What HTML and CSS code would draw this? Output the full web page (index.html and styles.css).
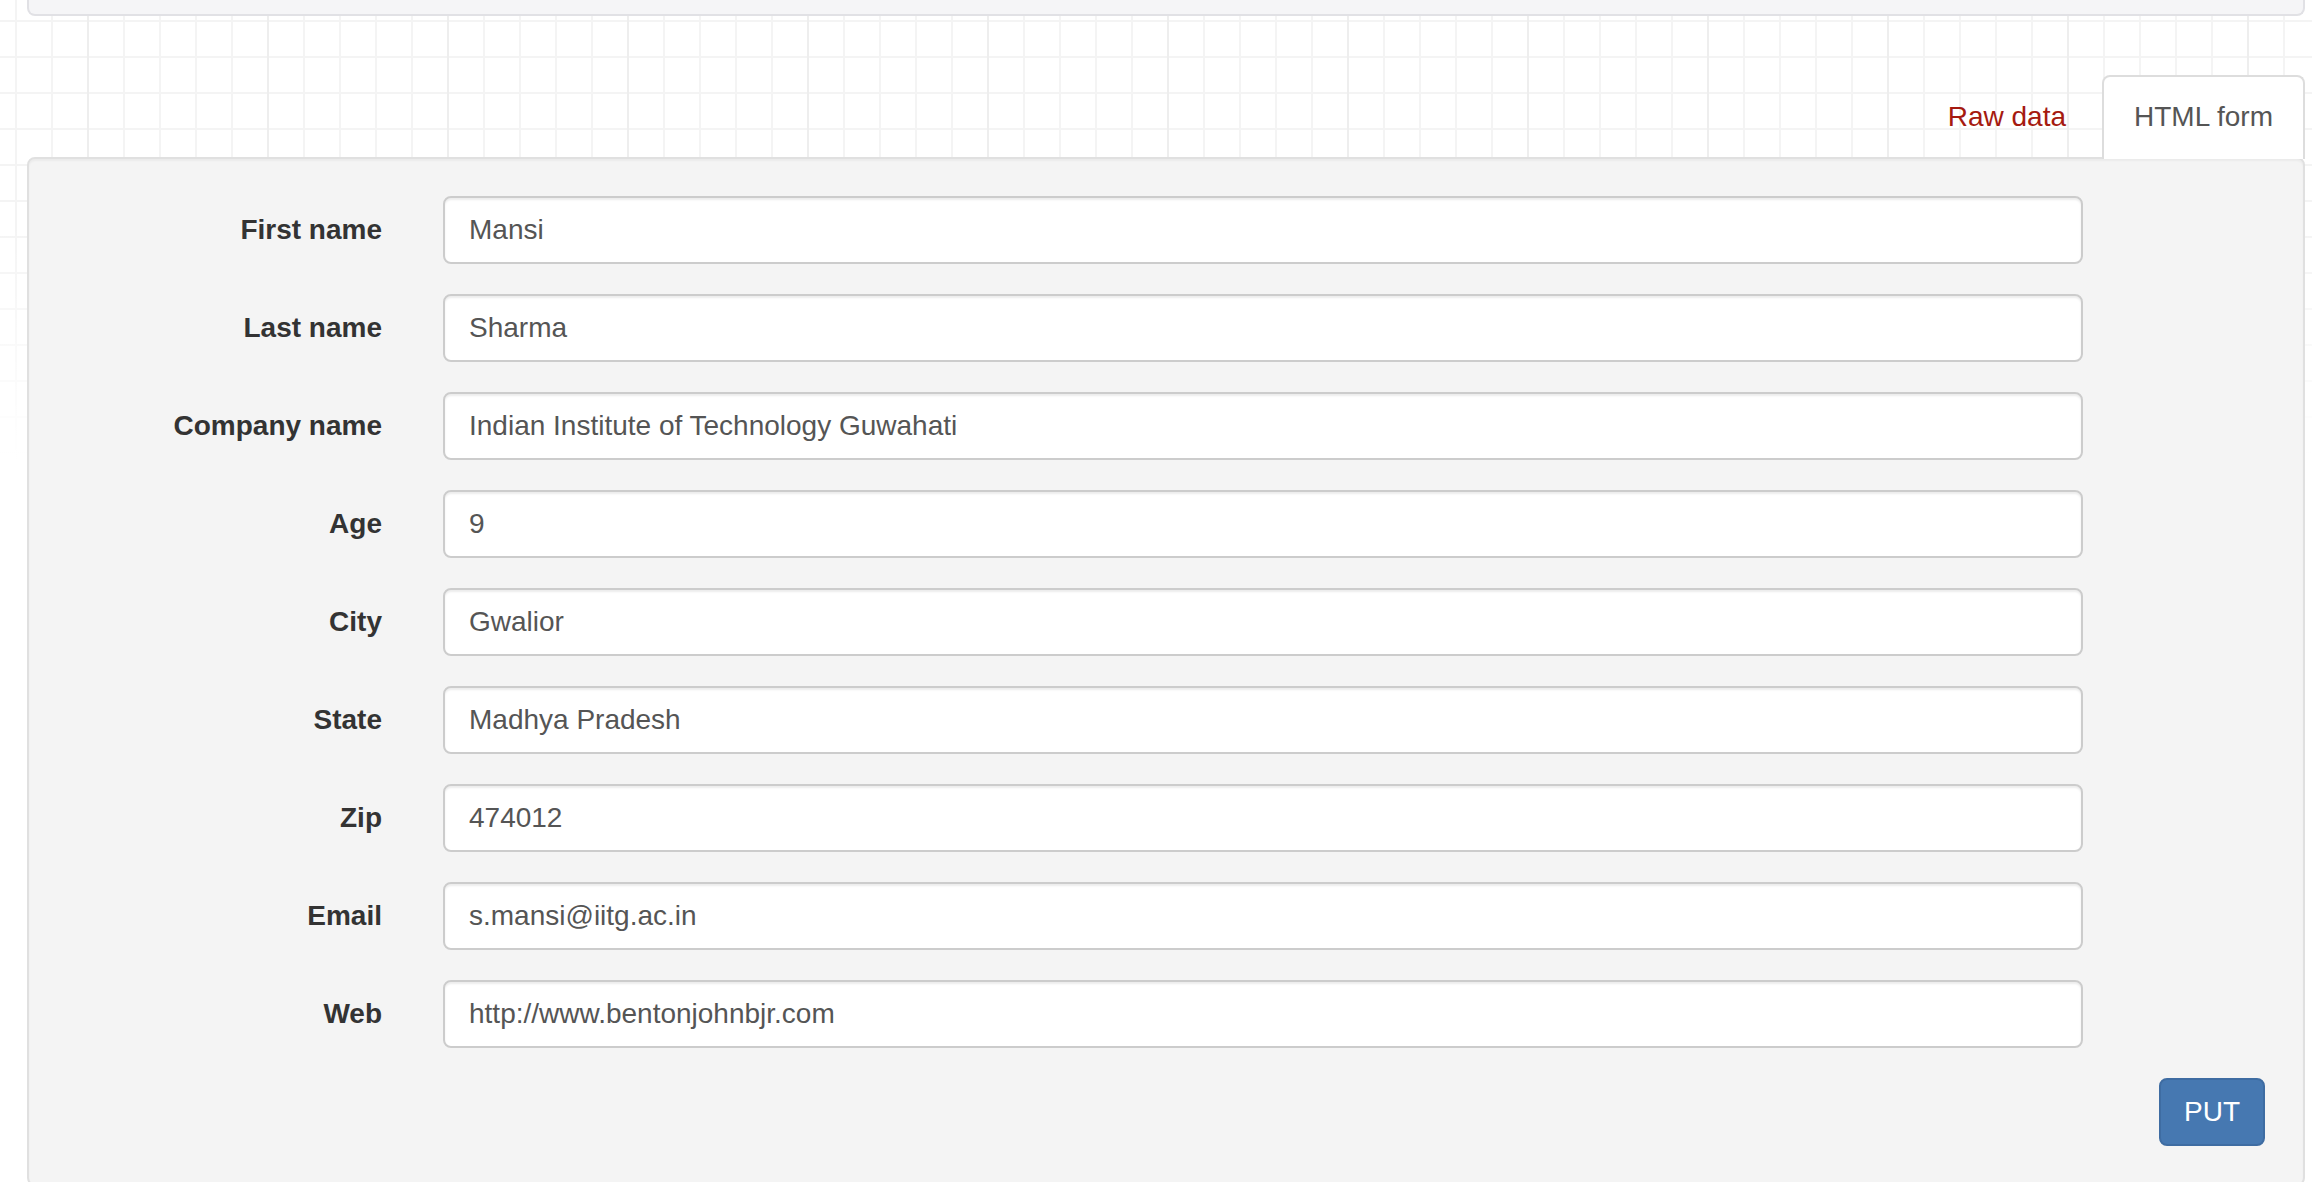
FILE: index.html
```html
<!DOCTYPE html>
<html lang="en">
<head>
<meta charset="utf-8">
<title>HTML form</title>
<link rel="stylesheet" href="styles.css">
</head>
<body>
<div class="page">
  <div class="response-panel"></div>

  <ul class="tabs">
    <li class="tab"><a class="tab-link" href="#raw">Raw data</a></li>
    <li class="tab tab-active"><a class="tab-link" href="#form">HTML form</a></li>
  </ul>

  <div class="well">
    <form class="form-horizontal">
      <div class="form-row">
        <label class="control-label">First name</label>
        <div class="form-control">Mansi</div>
      </div>
      <div class="form-row">
        <label class="control-label">Last name</label>
        <div class="form-control">Sharma</div>
      </div>
      <div class="form-row">
        <label class="control-label">Company name</label>
        <div class="form-control">Indian Institute of Technology Guwahati</div>
      </div>
      <div class="form-row">
        <label class="control-label">Age</label>
        <div class="form-control">9</div>
      </div>
      <div class="form-row">
        <label class="control-label">City</label>
        <div class="form-control">Gwalior</div>
      </div>
      <div class="form-row">
        <label class="control-label">State</label>
        <div class="form-control">Madhya Pradesh</div>
      </div>
      <div class="form-row">
        <label class="control-label">Zip</label>
        <div class="form-control">474012</div>
      </div>
      <div class="form-row">
        <label class="control-label">Email</label>
        <div class="form-control">s.mansi@iitg.ac.in</div>
      </div>
      <div class="form-row">
        <label class="control-label">Web</label>
        <div class="form-control">http://www.bentonjohnbjr.com</div>
      </div>
      <div class="form-actions">
        <button class="btn-primary" type="button">PUT</button>
      </div>
    </form>
  </div>
</div>
</body>
</html>
```

FILE: styles.css
```css
html, body {
  margin: 0;
  padding: 0;
  overflow: hidden;
}

body {
  font-family: "Liberation Sans", Arial, Helvetica, sans-serif;
  font-size: 28px;
  line-height: 40px;
  color: #333;
  background: #fff;
}

.page {
  min-height: 1182px;
  box-sizing: border-box;
  padding-left: 27px;
  padding-right: 7px;
  background-color: #fff;
  background-image:
    linear-gradient(to bottom, rgba(255,255,255,0) 0, rgba(255,255,255,0) 220px, #fff 460px),
    linear-gradient(to right, #eeeeee 0, #eeeeee 2px, transparent 2px),
    linear-gradient(to right, #f4f4f4 0, #f4f4f4 2px, transparent 2px),
    linear-gradient(to bottom, #f4f4f4 0, #f4f4f4 2px, transparent 2px);
  background-size: 100% 100%, 180px 100%, 36px 100%, 100% 36px;
  background-position: 0 0, 87px 0, 15px 0, 0 20px;
  background-repeat: no-repeat, repeat-x, repeat, repeat;
}

.response-panel {
  height: 14px;
  background: #f5f5f7;
  border: 2px solid #e1e1e5;
  border-top: none;
  border-radius: 0 0 8px 8px;
}

.tabs {
  list-style: none;
  margin: 59px 0 0 0;
  padding: 0;
  display: flex;
  justify-content: flex-end;
  align-items: flex-end;
  height: 82px;
}

.tab {
  margin-left: 4px;
  margin-bottom: -2px;
  position: relative;
  z-index: 1;
}

.tab-link {
  display: block;
  padding: 20px 30px 22px 30px;
  line-height: 40px;
  border: 2px solid transparent;
  border-bottom: none;
  border-radius: 8px 8px 0 0;
  color: #a51a10;
  text-decoration: none;
}

.tab-active .tab-link {
  background: #fff;
  border-color: #dddddd;
  color: #555;
}

.well {
  background: #f4f4f4;
  border: 2px solid #e0e0e0;
  border-radius: 8px;
  padding: 37px 38px 38px 38px;
  box-shadow: inset 0 2px 2px rgba(0, 0, 0, 0.04);
}

.form-horizontal {
  margin: 0;
}

.form-row {
  display: flex;
  align-items: flex-start;
  gap: 61px;
  margin-bottom: 30px;
}

.control-label {
  width: 315px;
  flex: none;
  text-align: right;
  font-weight: bold;
  color: #333;
  padding-top: 14px;
  line-height: 40px;
}

.form-control {
  width: 1640px;
  height: 68px;
  box-sizing: border-box;
  flex: none;
  padding: 12px 24px;
  line-height: 40px;
  color: #555;
  background: #fff;
  border: 2px solid #cccccc;
  border-radius: 8px;
  box-shadow: inset 0 2px 2px rgba(0, 0, 0, 0.075);
  white-space: nowrap;
}

.form-actions {
  display: flex;
  justify-content: flex-end;
}

.btn-primary {
  font-family: "Liberation Sans", Arial, Helvetica, sans-serif;
  font-size: 28px;
  line-height: 40px;
  height: 68px;
  padding: 12px 23px;
  color: #fff;
  background: #4678b1;
  border: 2px solid #3e6ca2;
  border-radius: 8px;
  cursor: pointer;
}
```
